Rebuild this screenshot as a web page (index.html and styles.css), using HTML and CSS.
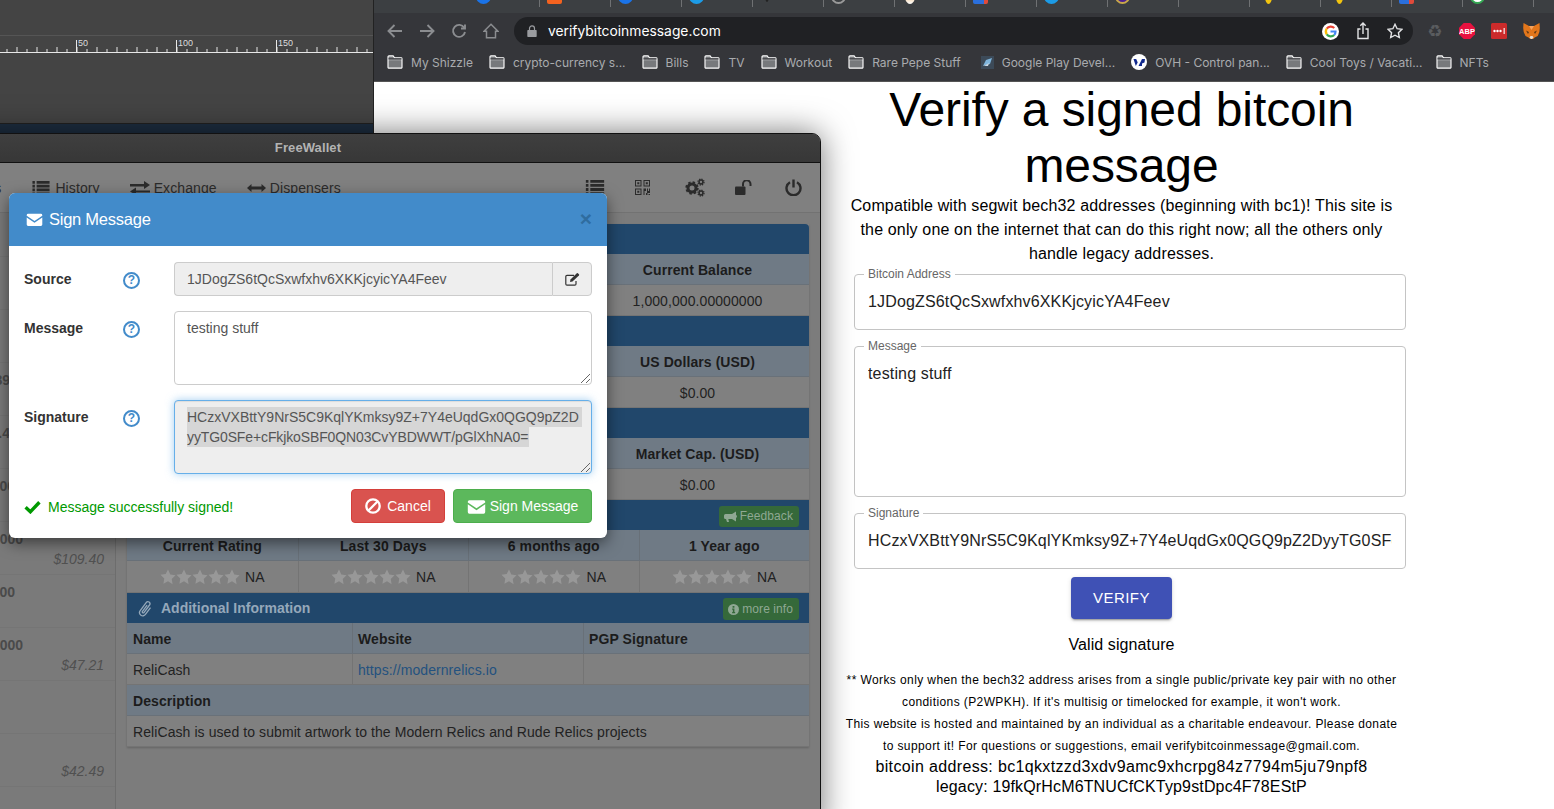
FILE: index.html
```html
<!DOCTYPE html>
<html lang="en">
<head>
<meta charset="utf-8">
<title>Verify a signed bitcoin message</title>
<link rel="stylesheet" href="styles.css">
</head>
<body>
<svg class="sprite" width="0" height="0" aria-hidden="true">
  <symbol id="folder" viewBox="0 0 17 15"><path d="M1 13.5V2a1 1 0 0 1 1-1h4.5l1.5 2h7a1 1 0 0 1 1 1v9.500a.5.5 0 0 1-.5.5H1.500a.5.5 0 0 1-.5-.5z" fill="#77797c" stroke="#fff" stroke-width="1.200"/><path d="M1 5h15" stroke="#fff" stroke-width="1"/><path d="M1.500 3.500h14V5h-14z" fill="#3d3e42"/></symbol>
  <symbol id="star" viewBox="0 0 16 16"><path d="M8 .6l2.300 4.900 5.200.7-3.800 3.700.9 5.300L8 12.200 3.400 14.700l.9-5.300L.5 5.700l5.200-.7z"/></symbol>
  <symbol id="env" viewBox="0 0 24 24"><path d="M1 6a2 2 0 0 1 2-2h18a2 2 0 0 1 2 2v.8l-11 7.400L1 6.800z M1 9.300l11 7.400 11-7.400V19a2 2 0 0 1-2 2H3a2 2 0 0 1-2-2z"/></symbol>
  <symbol id="listico" viewBox="0 0 20 16" preserveAspectRatio="none"><path d="M0 0h3v3H0zM5 0h15v3H5zM0 4.300h3v3H0zM5 4.300h15v3H5zM0 8.600h3v3H0zM5 8.600h15v3H5zM0 13h3v3H0zM5 13h15v3H5z"/></symbol>
</svg>

<main class="desktop">

  <section class="back-app">
    <svg class="ruler" width="374" height="30" viewBox="0 0 374 30">
      <defs>
        <pattern id="ticks" x="-3.500" width="20" height="30" patternUnits="userSpaceOnUse">
          <rect x="0" y="16" width="1" height="5" fill="#e4e4e4"/>
          <rect x="10" y="18" width="1" height="3" fill="#e4e4e4"/>
        </pattern>
      </defs>
      <rect width="374" height="30" fill="url(#ticks)"/>
      <rect y="21" width="374" height="1" fill="#e8e8e8"/>
      <path d="M76.500 9v12M176.500 9v12M276.500 9v12" stroke="#e8e8e8" stroke-width="1"/>
      <text x="78" y="15" class="ruler-num">50</text>
      <text x="178" y="15" class="ruler-num">100</text>
      <text x="278" y="15" class="ruler-num">150</text>
    </svg>
    <div class="back-strip"></div>
  </section>

  <section class="browser">
    <div class="tabs">
      <div class="tab"><i class="fav f-blue"></i></div>
      <div class="tab"><i class="fav f-orange"></i></div>
      <div class="tab"><i class="fav f-blue"></i></div>
      <div class="tab"><i class="fav f-cyan"></i></div>
      <div class="tab"><i class="fav f-dark"></i></div>
      <div class="tab"><i class="fav f-ring"></i></div>
      <div class="tab"><i class="fav f-home"></i></div>
      <div class="tab"><i class="fav f-bluered"></i></div>
      <div class="tab"><i class="fav f-cyan"></i></div>
      <div class="tab"><i class="fav f-purple"></i></div>
      <div class="tab"></div>
      <div class="tab"><i class="fav f-yellow"></i></div>
      <div class="tab"><i class="fav f-yellow"></i></div>
      <div class="tab"><i class="fav f-bluered"></i></div>
      <div class="tab"><i class="fav f-green"></i></div>
      <div class="tab"></div>
    </div>

    <div class="chrome-bar">
      <div class="nav-icons">
        <svg width="16" height="16" viewBox="0 0 16 16" class="cicon"><path d="M15 8H1.500M7.500 2l-6 6 6 6"/></svg>
        <svg width="16" height="16" viewBox="0 0 16 16" class="cicon"><path d="M1 8h13.500M8.500 2l6 6-6 6"/></svg>
        <svg width="16" height="16" viewBox="0 0 16 16" class="cicon"><path d="M13.200 4.700A6 6 0 1 0 14 9"/><path d="M14 1.500v4h-4"/></svg>
        <svg width="16" height="16" viewBox="0 0 16 16" class="cicon cicon-thin"><path d="M8 1.200l7 7h-2.500v6.500h-9V8.200H1z"/></svg>
      </div>
      <div class="address">
        <svg width="10" height="12" viewBox="0 0 10 12" class="lock"><path d="M1 5h8a.7.7 0 0 1 .7.7v5.500a.7.7 0 0 1-.7.7H1a.7.7 0 0 1-.7-.7V5.700A.7.7 0 0 1 1 5z" fill="#9a9ca0"/><path d="M2.500 5V3.400a2.500 2.500 0 0 1 5 0V5" fill="none" stroke="#9a9ca0" stroke-width="1.200"/></svg>
        <span class="url">verifybitcoinmessage.com</span>
        <div class="addr-right">
          <svg width="17" height="17" viewBox="0 0 18 18">
            <circle cx="9" cy="9" r="9" fill="#fff"/>
            <g fill="none" stroke-width="2.300">
              <path d="M13 5.400A5.300 5.300 0 0 0 5 6" stroke="#ea4335"/>
              <path d="M5 6a5.300 5.300 0 0 0 0 6" stroke="#fbbc05"/>
              <path d="M5 12a5.300 5.300 0 0 0 8 .6" stroke="#34a853"/>
              <path d="M13 12.600A5.300 5.300 0 0 0 14.300 9H9" stroke="#4285f4"/>
            </g>
          </svg>
          <svg width="14" height="18" viewBox="0 0 14 18" class="wicon"><path d="M4.500 7H2v9.500h10V7H9.500M7 12V1.200M4.300 3.800 7 1.100l2.700 2.700"/></svg>
          <svg width="16" height="16" viewBox="0 0 16 16" class="wicon"><path d="M8 1.300l2.100 4.400 4.800.6-3.500 3.400.9 4.800L8 12.200l-4.300 2.300.9-4.800L1.100 6.300l4.800-.6z"/></svg>
        </div>
      </div>
      <div class="extensions">
        <span class="recycle">♻</span>
        <svg width="16" height="16" viewBox="0 0 16 16"><path d="M4.700 0h6.600L16 4.700v6.600L11.300 16H4.700L0 11.300V4.700z" fill="#e8123f"/><text x="8" y="10.800" class="abp">ABP</text></svg>
        <svg width="16" height="16" viewBox="0 0 16 16"><rect width="16" height="16" rx="1.500" fill="#cc2b2b"/><circle cx="3.500" cy="8" r="1.200" fill="#fff"/><circle cx="6.500" cy="8" r="1.200" fill="#fff"/><circle cx="9.500" cy="8" r="1.200" fill="#fff"/><rect x="12.600" y="5" width="1.100" height="6" fill="#fff"/></svg>
        <svg width="17" height="16" viewBox="0 0 17 16"><path d="M.5 0l5.500 3h5L16.500 0l.3 5-.4 4-1.700 4-3 1.500-1.500 1.500h-3L5.500 14.500l-3-1.500L.7 9 .2 5z" fill="#e2761b"/><path d="M3 7.500l3 1.500-1 2zM14 7.500l-3 1.500 1 2z" fill="#5a3616"/><path d="M6.500 14.500l1-1.500h2l1 1.500-1.500 1.500h-1z" fill="#e8dccf"/><path d="M6 3l2.500 4 2.500-4z" fill="#f6a35c"/></svg>
      </div>
    </div>

    <nav class="bookmarks">
      <a class="bm"><svg width="16" height="14"><use href="#folder"/></svg>My Shizzle</a>
      <a class="bm"><svg width="16" height="14"><use href="#folder"/></svg>crypto-currency s...</a>
      <a class="bm"><svg width="16" height="14"><use href="#folder"/></svg>Bills</a>
      <a class="bm"><svg width="16" height="14"><use href="#folder"/></svg>TV</a>
      <a class="bm"><svg width="16" height="14"><use href="#folder"/></svg>Workout</a>
      <a class="bm"><svg width="16" height="14"><use href="#folder"/></svg>Rare Pepe Stuff</a>
      <a class="bm bm-play"><svg width="13" height="13" viewBox="0 0 13 13"><rect width="13" height="13" fill="#3c4a58"/><path d="M2 10l3-6 6-2-2 6z" fill="#7fb5dc"/><path d="M3 10l5-3-1 3z" fill="#c9d7e2"/></svg>Google Play Devel...</a>
      <a class="bm"><svg width="16" height="16" viewBox="0 0 16 16"><circle cx="8" cy="8" r="8" fill="#fff"/><path d="M2.500 5h2.700l1.500 3.500L4.800 12zM7.500 12l3.500-7h3l-.5 3.500-2.500 1v2.500z" fill="#122a8f"/></svg>OVH - Control pan...</a>
      <a class="bm"><svg width="16" height="14"><use href="#folder"/></svg>Cool Toys / Vacati...</a>
      <a class="bm bm-last"><svg width="16" height="14"><use href="#folder"/></svg>NFTs</a>
    </nav>

    <div class="page">
      <div class="page-col">
        <h1 class="page-title">Verify a signed bitcoin<br>message</h1>
        <p class="intro">Compatible with segwit bech32 addresses (beginning with bc1)! This site is the only one on the internet that can do this right now; all the others only handle legacy addresses.</p>
        <div class="field"><span class="field-label">Bitcoin Address</span><span class="field-value">1JDogZS6tQcSxwfxhv6XKKjcyicYA4Feev</span></div>
        <div class="field field-tall"><span class="field-label">Message</span><span class="field-value">testing stuff</span></div>
        <div class="field"><span class="field-label">Signature</span><span class="field-value">HCzxVXBttY9NrS5C9KqlYKmksy9Z+7Y4eUqdGx0QGQ9pZ2DyyTG0SFe+cFkjkoSBF0QN03CvYBDWWT/pGlXhNA0=</span></div>
        <button class="verify">VERIFY</button>
        <p class="valid">Valid signature</p>
        <p class="fine">** Works only when the bech32 address arises from a single public/private key pair with no other<br>conditions (P2WPKH). If it's multisig or timelocked for example, it won't work.<br>This website is hosted and maintained by an individual as a charitable endeavour. Please donate<br>to support it! For questions or suggestions, email verifybitcoinmessage@gmail.com.</p>
        <p class="donate donate-addr">bitcoin address: bc1qkxtzzd3xdv9amc9xhcrpg84z7794m5ju79npf8</p>
        <p class="donate">legacy: 19fkQrHcM6TNUCfCKTyp9stDpc4F78EStP</p>
      </div>
    </div>
  </section>

  <section class="wallet">
    <header class="wallet-title">FreeWallet</header>
    <div class="wallet-tools">
      <div class="tool-nav">
        <span class="tool"><svg width="20" height="14" viewBox="0 0 20 16"><use href="#listico"/></svg>Balances</span>
        <span class="tool"><svg width="20" height="14" viewBox="0 0 20 16"><use href="#listico"/></svg>History</span>
        <span class="tool"><svg width="20" height="14" viewBox="0 0 20 14"><path d="M0 3h14V0l6 4-6 4V5.500H0zM20 9.500H6V6.500L0 10.500l6 3.500v-2.500h14z"/></svg>Exchange</span>
        <span class="tool"><svg width="19" height="8" viewBox="0 0 19 8"><path d="M0 4l4.500-4v2.500h10V0L19 4l-4.500 4V5.500h-10V8z"/></svg>Dispensers</span>
      </div>
      <div class="tool-right">
        <svg width="20" height="15" viewBox="0 0 20 16"><use href="#listico"/></svg>
        <svg width="15" height="15" viewBox="0 0 15 15"><path d="M0 0h6.500v6.500H0zM1 1v4.500h4.500V1zM2.300 2.300h2v2h-2zM8.500 0H15v6.500H8.500zM9.500 1v4.500H14V1zM10.800 2.300h2v2h-2zM0 8.500h6.500V15H0zM1 9.500V14h4.500V9.500zM2.300 10.800h2v2h-2zM8.500 8.500H11v2.500H9.500V15h-1zM12 8.500h1V11h1V8.500h1V13h-3zM11 13h1.500v2H11zM13.500 14H15v1h-1.500z"/></svg>
        <svg width="20" height="19" viewBox="0 0 20 19" class="cogs">
          <circle cx="7" cy="10" r="4" stroke-width="3"/>
          <circle cx="7" cy="10" r="5.700" stroke-width="2" stroke-dasharray="2.400 2.070"/>
          <circle cx="16" cy="4" r="1.900" stroke-width="1.500"/>
          <circle cx="16" cy="4" r="3" stroke-width="1.300" stroke-dasharray="1.300 1.060"/>
          <circle cx="16" cy="15" r="1.900" stroke-width="1.500"/>
          <circle cx="16" cy="15" r="3" stroke-width="1.300" stroke-dasharray="1.300 1.060"/>
        </svg>
        <svg width="17" height="15" viewBox="0 0 17 15"><rect y="6.500" width="10.500" height="8.500" rx="1"/><path d="M8 6.500V4a3.500 3.500 0 0 1 7.500 0v2" fill="none" stroke="#2b2b2b" stroke-width="2"/></svg>
        <svg width="17" height="17" viewBox="0 0 17 17" class="power"><path d="M5 3.200a7 7 0 1 0 7 0M8.500 0.500v8"/></svg>
      </div>
    </div>

    <div class="wallet-body">
      <aside class="side">
        <div class="side-row side-row-first"></div>
        <div class="side-row"></div>
        <div class="side-row"></div>
        <div class="side-row"><div class="amt amt-s">1,000,000.89</div></div>
        <div class="side-row"><div class="amt amt-s">1,200.4</div></div>
        <div class="side-row"><div class="amt amt-m">1,000,000.00</div></div>
        <div class="side-row"><div class="amt amt-l">1,000.00000000</div><div class="usd">$109.40</div></div>
        <div class="side-row"><div class="amt amt-m">1.00000000</div></div>
        <div class="side-row"><div class="amt amt-l">1,000.00000000</div><div class="usd">$47.21</div></div>
        <div class="side-row"></div>
        <div class="side-row"><div class="amt amt-none">&nbsp;</div><div class="usd">$42.49</div></div>
      </aside>

      <div class="content">
        <div class="panel">
          <div class="sec sec-first"></div>
          <div class="cols3 head"><div></div><div></div><div>Current Balance</div></div>
          <div class="cols3 row"><div></div><div></div><div>1,000,000.00000000</div></div>
          <div class="sec"></div>
          <div class="cols3 head"><div></div><div></div><div>US Dollars (USD)</div></div>
          <div class="cols3 row"><div></div><div></div><div>$0.00</div></div>
          <div class="sec"></div>
          <div class="cols3 head"><div></div><div></div><div>Market Cap. (USD)</div></div>
          <div class="cols3 row"><div></div><div></div><div>$0.00</div></div>

          <div class="sec">
            <a class="pill"><svg width="13" height="11" viewBox="0 0 13 11"><path d="M13 5.500a1.500 1.500 0 0 0-1-1.400V.5L8 3H1.500A1.500 1.500 0 0 0 0 4.500v2A1.500 1.500 0 0 0 1.500 8H2l1 3h2L4.300 8H8l4 2.500V6.900a1.500 1.500 0 0 0 1-1.400z"/></svg>Feedback</a>
          </div>
          <div class="cols4 head"><div>Current Rating</div><div>Last 30 Days</div><div>6 months ago</div><div>1 Year ago</div></div>
          <div class="cols4 row row-stars">
            <div><span class="stars"><svg width="16" height="16"><use href="#star"/></svg><svg width="16" height="16"><use href="#star"/></svg><svg width="16" height="16"><use href="#star"/></svg><svg width="16" height="16"><use href="#star"/></svg><svg width="16" height="16"><use href="#star"/></svg></span>NA</div>
            <div><span class="stars"><svg width="16" height="16"><use href="#star"/></svg><svg width="16" height="16"><use href="#star"/></svg><svg width="16" height="16"><use href="#star"/></svg><svg width="16" height="16"><use href="#star"/></svg><svg width="16" height="16"><use href="#star"/></svg></span>NA</div>
            <div><span class="stars"><svg width="16" height="16"><use href="#star"/></svg><svg width="16" height="16"><use href="#star"/></svg><svg width="16" height="16"><use href="#star"/></svg><svg width="16" height="16"><use href="#star"/></svg><svg width="16" height="16"><use href="#star"/></svg></span>NA</div>
            <div><span class="stars"><svg width="16" height="16"><use href="#star"/></svg><svg width="16" height="16"><use href="#star"/></svg><svg width="16" height="16"><use href="#star"/></svg><svg width="16" height="16"><use href="#star"/></svg><svg width="16" height="16"><use href="#star"/></svg></span>NA</div>
          </div>

          <div class="sec sec-info">
            <svg width="15" height="17" viewBox="0 0 15 17" class="clip"><path d="M13.500 8.500 7.500 14.600a3.200 3.200 0 0 1-4.600-4.500l7-7.200a2 2 0 0 1 3 2.900L6.300 12.500a.9.900 0 0 1-1.300-1.300l5.500-5.700" transform="rotate(-8 7 8)"/></svg>
            <span class="sec-title">Additional Information</span>
            <a class="pill pill-info"><svg width="11" height="11" viewBox="0 0 12 12"><circle cx="6" cy="6" r="6"/><path d="M5 2.200h2v1.800H5zM4.500 5H7v3.800h.8V10H4.500V8.800h.8V6.200h-.8z" fill="#35693a"/></svg>more info</a>
          </div>
          <div class="cols-info head head-left"><div>Name</div><div>Website</div><div>PGP Signature</div></div>
          <div class="cols-info row row-left"><div>ReliCash</div><div class="link">https://modernrelics.io</div><div></div></div>
          <div class="head head-left head-wide">Description</div>
          <div class="row row-left row-wide">ReliCash is used to submit artwork to the Modern Relics and Rude Relics projects</div>
        </div>
      </div>
    </div>

    <div class="modal">
      <header class="modal-head">
        <svg width="17" height="17" viewBox="0 0 24 24"><use href="#env"/></svg>
        <h2 class="modal-title">Sign Message</h2>
        <span class="modal-x">×</span>
      </header>
      <div class="modal-body">
        <label class="f-label">Source</label>
        <span class="help">?</span>
        <div class="input-group">
          <div class="input input-readonly">1JDogZS6tQcSxwfxhv6XKKjcyicYA4Feev</div>
          <div class="addon"><svg width="15" height="13" viewBox="0 0 15 13"><path d="M11 8v3a1.200 1.200 0 0 1-1.200 1.200H2A1.200 1.200 0 0 1 .8 11V3.500A1.200 1.200 0 0 1 2 2.300h7" fill="none" stroke="#333" stroke-width="1.200"/><path d="M5 9l.5-2.500L11.800.3a.8.8 0 0 1 1.100 0l1 1a.8.8 0 0 1 0 1.100L7.500 8.600z" fill="#333"/></svg></div>
        </div>

        <label class="f-label">Message</label>
        <span class="help">?</span>
        <div class="input textarea">testing stuff<svg class="grip" width="11" height="11" viewBox="0 0 11 11"><path d="M1 10 10 1M6 10l4-4" stroke="#666" stroke-width="1"/></svg></div>

        <label class="f-label">Signature</label>
        <span class="help">?</span>
        <div class="input textarea textarea-focus"><span class="sel-line">HCzxVXBttY9NrS5C9KqlYKmksy9Z+7Y4eUqdGx0QGQ9pZ2D</span><span class="sel-line sel-line-2">yyTG0SFe+cFkjkoSBF0QN03CvYBDWWT/pGlXhNA0=</span><svg class="grip" width="11" height="11" viewBox="0 0 11 11"><path d="M1 10 10 1M6 10l4-4" stroke="#666" stroke-width="1"/></svg></div>
      </div>
      <footer class="modal-foot">
        <div class="status">
          <svg width="17" height="14" viewBox="0 0 16 13"><path d="M1.500 6.800 6 11l8.500-9" fill="none" stroke="#090" stroke-width="3.200"/></svg>
          <span>Message successfully signed!</span>
        </div>
        <div class="foot-btns">
          <button class="btn btn-red"><svg width="16" height="16" viewBox="0 0 16 16"><circle cx="8" cy="8" r="6.700" fill="none" stroke="#fff" stroke-width="2.300"/><path d="M3.500 12.500l9-9" stroke="#fff" stroke-width="2.300"/></svg>Cancel</button>
          <button class="btn btn-green"><svg width="19" height="19" viewBox="0 0 24 24"><use href="#env"/></svg>Sign Message</button>
        </div>
      </footer>
    </div>
  </section>
</main>
</body>
</html>
```

FILE: styles.css
```css
* { box-sizing: border-box; }
html, body { margin: 0; padding: 0; height: 100%; overflow: hidden; }
body { font-family: "Liberation Sans", Arial, sans-serif; font-size: 14px; color: #222; }
.sprite { position: absolute; }

.desktop { position: relative; width: 1554px; height: 809px; overflow: hidden; background: #1e2f42; }

/* back application window */
.back-app { position: absolute; left: 0; top: 0; width: 374px; height: 133px; background: #444; display: flex; flex-direction: column; }
.back-app::before { content: ""; height: 35px; border-bottom: 1px solid #555; flex: none; }
.ruler { display: block; flex: none; margin-top: -5px; }
.ruler-num { font: 9px "Liberation Sans", sans-serif; fill: #ddd; }
.back-strip { margin-top: auto; height: 10px; background: #1d2e41; border-top: 1px solid #222; }

/* browser */
.browser { position: absolute; left: 373px; top: 0; right: 0; bottom: 0; display: flex; flex-direction: column; background: #fff; border-left: 1px solid #222; }
.tabs { height: 13px; background: #3c3f42; display: flex; padding-left: 95px; flex: none; }
.tab { width: 71px; height: 7px; border-right: 1px solid #6f7173; overflow: hidden; flex: none; padding-left: 7px; }
.fav { display: block; width: 15px; height: 15px; margin-top: -11px; border-radius: 50%; }
.f-blue { background: #1a73e8; }
.f-orange { background: #f4621f; border-radius: 2px; }
.f-cyan { background: #1c9be6; }
.f-dark { background: #222; width: 4px; height: 13px; margin-left: 5px; }
.f-ring { background: none; border: 2px solid #999; }
.f-home { background: linear-gradient(#e89a3c, #fff); width: 10px; margin-left: 3px; }
.f-bluered { background: linear-gradient(90deg, #2a6fdc 70%, #e04a3a 70%); border-radius: 2px; }
.f-purple { background: #4b1f8f; border: 2px solid #c8a84a; }
.f-yellow { background: #f2c40f; width: 7px; margin-left: 8px; }
.f-green { background: #fff; border: 2px solid #34a853; }

.chrome-bar { height: 32px; background: #35363a; display: flex; align-items: flex-start; flex: none; padding-left: 13px; }
.nav-icons { display: flex; gap: 16px; width: 127px; padding-top: 10px; flex: none; }
.cicon { fill: none; stroke: #8b8d90; stroke-width: 1.900; }
.cicon-thin { stroke-width: 1.500; }
.address { width: 899px; height: 28px; margin-top: 4px; background: #202124; border-radius: 14px; display: flex; align-items: center; padding-left: 13px; flex: none; }
.lock { flex: none; }
.url { color: #fff; font: 13.850px/28px Inter, sans-serif; margin-left: 11px; }
.addr-right { margin-left: auto; display: flex; align-items: center; gap: 17px; padding-right: 10px; }
.wicon { fill: none; stroke: #e2e3e5; stroke-width: 1.400; }
.extensions { display: flex; gap: 16px; align-items: center; padding: 10px 0 0 14px; }
.recycle { color: #5a5c5f; font: 17px/16px "DejaVu Sans", sans-serif; width: 16px; text-align: center; }
.abp { font: bold 7.500px "Liberation Sans", sans-serif; fill: #fff; text-anchor: middle; }

.bookmarks { height: 37px; background: #35363a; border-bottom: 1px solid #555; display: flex; align-items: center; gap: 16px; padding: 0 0 2px 13px; flex: none; }
.bm { display: flex; align-items: center; gap: 8px; color: #a9abae; font: 12px Inter, sans-serif; white-space: nowrap; }
.bm svg { flex: none; }
.bm-play { margin-left: 4px; }
.bm-last { margin-left: -3px; }

/* web page */
.page { flex: 1; background: #fff; padding-left: 471.500px; color: #000; min-height: 0; }
.page-col { width: 552px; text-align: center; }
.page-title { margin: 0; font-size: 48px; line-height: 56px; font-weight: 400; letter-spacing: -.1px; }
.intro { margin: 0; font-size: 16px; line-height: 24px; letter-spacing: .15px; }
.field { position: relative; display: block; width: 552px; height: 56px; margin: 8px 0 16px 8.500px; border: 1px solid #c4c4c4; border-radius: 4px; padding: 0 13px; text-align: left; font-size: 16px; line-height: 53px; color: #222; }
.field-value { display: block; overflow: hidden; white-space: nowrap; letter-spacing: .15px; }
.field-tall { height: 151px; line-height: 53px; margin-top: 0; }
.field + .field { margin-top: 0; }
.field + .field + .field { margin-bottom: 8px; }
.field-label { position: absolute; left: 9px; top: -9px; padding: 0 4px; background: #fff; color: #666; font-size: 12px; line-height: 16px; }
.verify { display: block; margin: 0 auto; width: 101px; height: 42px; padding: 0 0 2px; background: #3f51b5; color: #fff; border: 0; border-radius: 4px; font: 15px "Liberation Sans", sans-serif; letter-spacing: .45px; box-shadow: 0 3px 1px -2px rgba(0,0,0,.2), 0 2px 2px rgba(0,0,0,.14), 0 1px 5px rgba(0,0,0,.12); }
.valid { margin: 14px 0 0; font-size: 16px; line-height: 24px; letter-spacing: .1px; }
.fine { margin: 12px 0 0; font-size: 12px; line-height: 22px; letter-spacing: .4px; }
.donate { margin: 0; font-size: 16px; line-height: 20px; letter-spacing: .15px; }
.donate-addr { letter-spacing: .35px; }

/* wallet window */
.wallet { position: absolute; left: -205px; top: 133px; width: 1026px; height: 700px; background: #7c7c7c; border: 1px solid #111; border-top-right-radius: 9px; box-shadow: 0 0 32px rgba(0,0,0,.55); }
.wallet-title { height: 29px; background: linear-gradient(#3f3f3f, #373737); border-bottom: 1px solid #111; border-top-right-radius: 8px; color: #b3b3b3; font-weight: bold; font-size: 13px; line-height: 27px; text-align: center; letter-spacing: .1px; }
.wallet-tools { height: 50px; background: #808080; border-bottom: 1px solid #727272; display: flex; align-items: center; padding: 0 18px 0 123px; color: #2b2b2b; }
.tool-nav { display: flex; gap: 30px; }
.tool { display: flex; align-items: center; gap: 4px; font-size: 14px; letter-spacing: .1px; fill: #2b2b2b; white-space: nowrap; }
.tool-right { margin-left: auto; display: grid; grid-template-columns: repeat(4, 50px) 17px; align-items: center; fill: #2b2b2b; }
.cogs { fill: none; stroke: #2b2b2b; }
.power { fill: none; stroke: #2b2b2b; stroke-width: 2.400; }

.wallet-body { display: flex; }
.side { width: 320px; flex: none; border-right: 1px solid #6d6d6d; height: 620px; background: #7a7a7a; }
.side-row { height: 53px; border-bottom: 1px solid #757575; padding-top: 9px; color: #4a4a4a; overflow: hidden; }
.side-row-first { height: 44px; }
.amt { font-weight: bold; font-size: 14px; line-height: 16px; text-align: right; white-space: nowrap; overflow: hidden; }
.amt-s { width: 214px; }
.amt-m { width: 219px; }
.amt-l { width: 227px; }
.amt-none { width: 10px; }
.usd { font-style: italic; text-align: right; padding-right: 11px; line-height: 18px; margin-top: 3px; color: #505050; }

.content { flex: 1; padding: 11px 11px 0 11px; letter-spacing: .08px; }
.panel { width: 682px; background: #808080; box-shadow: 0 1px 2px rgba(0,0,0,.2); }
.sec { height: 30px; background: #21476b; display: flex; align-items: center; padding: 0 10px; }
.sec-first { border-radius: 4px 4px 0 0; }
.sec-title { font-weight: bold; color: #95a8ba; margin-left: 9px; letter-spacing: 0; }
.clip { fill: none; stroke: #95a8ba; stroke-width: 1.300; }
.pill { margin: 2px 0 0 auto; height: 21px; border-radius: 3px; background: #35693a; color: #8fa893; fill: #8fa893; font-size: 12px; display: flex; align-items: center; gap: 3px; padding: 0 6px 0 5px; }
.pill-info { height: 22px; }
.head { height: 31px; background: #6f7a85; color: #1c1c1c; font-weight: bold; border-bottom: 1px solid #697179; }
.row { height: 31px; background: #808080; color: #222; border-bottom: 1px solid #747474; }
.cols3, .cols4, .cols-info { display: grid; text-align: center; }
.cols3 { grid-template-columns: 1fr 1fr 224px; }
.cols4 { grid-template-columns: repeat(4, 1fr); }
.cols-info { grid-template-columns: 225px 231px 226px; text-align: left; }
.cols3 > div, .cols4 > div, .cols-info > div { height: 30px; padding-top: 1px; line-height: 30px; border-left: 1px solid #747474; }
.head > div { border-left-color: #687078; }
.cols3 > div:first-child, .cols4 > div:first-child, .cols-info > div:first-child { border-left: 0; }
.row-stars { height: 32px; }
.row-stars > div { height: 31px; padding-top: 1px; line-height: 31px; display: flex; justify-content: center; align-items: center; gap: 5px; }
.stars { display: inline-flex; fill: #989898; }
.head-left > div, .row-left > div { padding-left: 5px; }
.cols-info > div:first-child { padding-left: 6px; }
.head-wide, .row-wide { padding-left: 6px; padding-top: 2px; line-height: 29px; }
.link { color: #24527f; }

/* modal */
.modal { position: absolute; left: 213px; top: 59px; width: 598px; height: 345px; background: #fff; border-radius: 6px; box-shadow: 0 5px 15px rgba(0,0,0,.5); overflow: hidden; display: flex; flex-direction: column; }
.modal-head { height: 53px; background: #428bca; color: #fff; fill: #fff; display: flex; align-items: center; padding: 0 15px 0 17px; flex: none; }
.modal-title { margin: 0 0 0 6px; font-size: 16.500px; font-weight: 400; letter-spacing: -.25px; }
.modal-x { margin: -3px 0 0 auto; color: #2f6d9f; font-size: 21px; font-weight: bold; line-height: 1; }
.modal-body { padding: 16px 15px 0 15px; display: grid; grid-template-columns: 64px 22px minmax(0, 1fr); column-gap: 32px; row-gap: 15px; }
.f-label { font-weight: bold; color: #333; padding-top: 9px; line-height: 17px; }
.help { width: 17px; height: 17px; margin: 10px 0 0 3px; border: 2px solid #428bca; border-radius: 50%; color: #428bca; font-weight: bold; font-size: 12px; line-height: 13px; text-align: center; }
.input { border: 1px solid #ccc; border-radius: 4px; color: #555; padding: 6px 12px; line-height: 20px; background: #fff; }
.input-group { display: flex; height: 34px; }
.input-readonly { flex: 1; background: #eee; border-radius: 4px 0 0 4px; border-right: 0; }
.addon { width: 40px; background: #eee; border: 1px solid #ccc; border-radius: 0 4px 4px 0; display: flex; align-items: center; justify-content: center; }
.textarea { position: relative; height: 74px; white-space: nowrap; padding-top: 6px; }
.textarea-focus { background: #eee; border-color: #66afe9; box-shadow: inset 0 1px 1px rgba(0,0,0,.075), 0 0 8px rgba(102,175,233,.6); }
.sel-line { display: block; width: fit-content; background: #d6d6d6; padding-right: 3px; }
.sel-line-2 { letter-spacing: -.12px; padding-right: 1px; }
.grip { position: absolute; right: 0; bottom: 0; }
.modal-foot { display: flex; justify-content: space-between; align-items: center; padding: 15px 15px 0 15px; }
.status { display: flex; align-items: center; gap: 7px; color: #090; padding-top: 1px; }
.foot-btns { display: flex; gap: 8px; }
.btn { height: 34px; border-radius: 4px; color: #fff; fill: #fff; font: 14px "Liberation Sans", sans-serif; display: flex; align-items: center; justify-content: center; gap: 6px; padding: 0; }
.btn-red { width: 94px; background: #d9534f; border: 1px solid #d43f3a; }
.btn-green { width: 139px; background: #5cb85c; border: 1px solid #4cae4c; gap: 4px; }
```
